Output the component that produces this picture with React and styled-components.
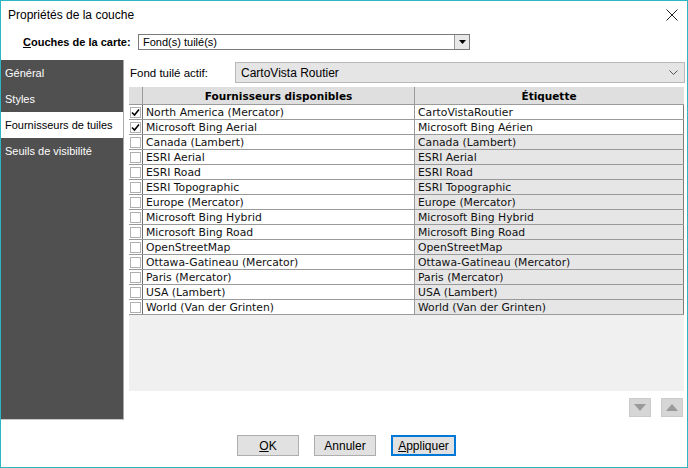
import React from "react";
import styled, { createGlobalStyle } from "styled-components";

const providers = [
  { name: "North America (Mercator)", label: "CartoVistaRoutier", checked: true },
  { name: "Microsoft Bing Aerial", label: "Microsoft Bing Aérien", checked: true },
  { name: "Canada (Lambert)", label: "Canada (Lambert)" },
  { name: "ESRI Aerial", label: "ESRI Aerial" },
  { name: "ESRI Road", label: "ESRI Road" },
  { name: "ESRI Topographic", label: "ESRI Topographic" },
  { name: "Europe (Mercator)", label: "Europe (Mercator)" },
  { name: "Microsoft Bing Hybrid", label: "Microsoft Bing Hybrid" },
  { name: "Microsoft Bing Road", label: "Microsoft Bing Road" },
  { name: "OpenStreetMap", label: "OpenStreetMap" },
  { name: "Ottawa-Gatineau (Mercator)", label: "Ottawa-Gatineau (Mercator)" },
  { name: "Paris (Mercator)", label: "Paris (Mercator)" },
  { name: "USA (Lambert)", label: "USA (Lambert)" },
  { name: "World (Van der Grinten)", label: "World (Van der Grinten)" },
];

const tabs = ["Général", "Styles", "Fournisseurs de tuiles", "Seuils de visibilité"];

const App = () => {
  return (
    <>
      <GlobalStyle />
      <Window>
        <TitleBar>
          <Title>Propriétés de la couche</Title>
          <CloseIcon width="12" height="12" viewBox="0 0 12 12">
            <path d="M0.5 0.5 L11.5 11.5 M11.5 0.5 L0.5 11.5" stroke="#222" strokeWidth="1" />
          </CloseIcon>
        </TitleBar>

        <LayerRow>
          <LayerLabel>
            <u>C</u>ouches de la carte:
          </LayerLabel>
          <LayerSelect>
            <span>Fond(s) tuilé(s)</span>
            <DropButton>
              <svg width="7" height="4" viewBox="0 0 7 4">
                <path d="M0 0 L7 0 L3.5 4 Z" fill="#000" />
              </svg>
            </DropButton>
          </LayerSelect>
        </LayerRow>

        <Body>
          <Sidebar>
            {tabs.map((t, i) => (
              <Tab key={t} active={i === 2}>
                {t}
              </Tab>
            ))}
          </Sidebar>

          <Content>
            <FieldRow>
              <FieldLabel>Fond tuilé actif:</FieldLabel>
              <Combo>
                <span>CartoVista Routier</span>
                <svg width="9" height="5" viewBox="0 0 9 5">
                  <path d="M0.5 0.5 L4.5 4.5 L8.5 0.5" stroke="#555" fill="none" />
                </svg>
              </Combo>
            </FieldRow>

            <Grid>
              <HeaderRow>
                <HeadCell />
                <HeadCell>Fournisseurs disponibles</HeadCell>
                <HeadCell last>Étiquette</HeadCell>
              </HeaderRow>
              {providers.map((p) => (
                <Row key={p.name}>
                  <CheckCell>
                    <Check>
                      {p.checked && (
                        <svg width="9" height="9" viewBox="0 0 9 9">
                          <path d="M1 4.5 L3.5 7 L8 1.5" stroke="#000" strokeWidth="1.6" fill="none" />
                        </svg>
                      )}
                    </Check>
                  </CheckCell>
                  <Cell>{p.name}</Cell>
                  <Cell readOnly={!p.checked} last>
                    {p.label}
                  </Cell>
                </Row>
              ))}
              <GridFill />
            </Grid>

            <ArrowRow>
              <ArrowButton>
                <svg width="12" height="7" viewBox="0 0 12 7">
                  <path d="M0 0 L12 0 L6 7 Z" fill="#9a9a9a" />
                </svg>
              </ArrowButton>
              <ArrowButton>
                <svg width="12" height="7" viewBox="0 0 12 7">
                  <path d="M0 7 L12 7 L6 0 Z" fill="#9a9a9a" />
                </svg>
              </ArrowButton>
            </ArrowRow>
          </Content>
        </Body>

        <Footer>
          <Button>
            <span>
              <u>O</u>K
            </span>
          </Button>
          <Button>Annuler</Button>
          <Button primary>
            <span>
              <u>A</u>ppliquer
            </span>
          </Button>
        </Footer>
      </Window>
    </>
  );
};

export default App;

const GlobalStyle = createGlobalStyle`
  html, body {
    margin: 0;
    padding: 0;
    background: #ffffff;
  }
  * {
    box-sizing: border-box;
  }
`;

const Window = styled.div`
  display: flex;
  flex-direction: column;

  width: 688px;
  height: 468px;

  background: #ffffff;
  border: 1px solid #2cb6c4;

  font-family: "Liberation Sans", Arial, sans-serif;
  font-size: 12px;
  color: #000;
`;

const TitleBar = styled.div`
  display: flex;
  align-items: center;
  justify-content: space-between;

  height: 28px;
  padding: 0 9px 0 7px;
`;

const Title = styled.div`
  font-size: 12px;
`;

const CloseIcon = styled.svg`
  display: block;
`;

const LayerRow = styled.div`
  display: flex;
  align-items: center;

  height: 16px;
  margin-top: 5px;
  padding-left: 22px;
`;

const LayerLabel = styled.div`
  width: 115px;
  white-space: nowrap;
  font-weight: bold;
  font-size: 11px;
`;

const LayerSelect = styled.div`
  display: flex;
  align-items: center;
  justify-content: space-between;

  width: 332px;
  height: 16px;
  padding-left: 4px;

  border: 1px solid #7a7a7a;
  background: #fff;

  font-size: 11px;
`;

const DropButton = styled.div`
  display: grid;
  place-items: center;

  width: 15px;
  height: 14px;

  background: #e8e8e8;
  border-left: 1px solid #9a9a9a;
`;

const Body = styled.div`
  display: flex;

  height: 360px;
  margin-top: 10px;
`;

const Sidebar = styled.div`
  display: flex;
  flex-direction: column;

  width: 123px;
  height: 360px;

  background: #505050;
  border-right: 1px solid #a8a8a8;
  border-bottom: 1px solid #c8c8c8;
`;

const Tab = styled.div`
  display: flex;
  align-items: center;

  height: 26px;
  padding-left: 4px;
  white-space: nowrap;

  background: ${({ active }) => (active ? "#ffffff" : "transparent")};
  color: ${({ active }) => (active ? "#000000" : "#ffffff")};

  font-size: 11px;
`;

const Content = styled.div`
  display: flex;
  flex-direction: column;

  flex: 1;
  padding: 2px 2px 0 5px;
`;

const FieldRow = styled.div`
  display: flex;
  align-items: center;

  height: 21px;
`;

const FieldLabel = styled.div`
  width: 106px;
  padding-left: 1px;
  font-size: 11.5px;
`;

const Combo = styled.div`
  display: flex;
  align-items: center;
  justify-content: space-between;

  flex: 1;
  height: 21px;
  padding: 0 6px 0 5px;

  background: #e5e5e5;
  border: 1px solid #b8b8b8;

  font-size: 12px;
`;

const Grid = styled.div`
  display: flex;
  flex-direction: column;

  height: 304px;
  margin-top: 4px;
  margin-right: 1px;

  background: #f0f0f0;
  font-family: "DejaVu Sans", Verdana, sans-serif;
  font-size: 10.8px;
`;

const cols = `
  display: grid;
  grid-template-columns: 14px 272px 1fr;
`;

const HeaderRow = styled.div`
  ${cols}
  height: 18px;
  background: #dfdfdf;
  border-bottom: 1px solid #9a9a9a;
`;

const HeadCell = styled.div`
  display: flex;
  align-items: center;
  justify-content: center;

  border-right: 1px solid ${({ last }) => (last ? "#dfdfdf" : "#9a9a9a")};
  font-size: 10.5px;
  font-weight: bold;
`;

const Row = styled.div`
  ${cols}
  height: 15px;
  background: #ffffff;
  border-bottom: 1px solid #9a9a9a;
`;

const CheckCell = styled.div`
  display: grid;
  place-items: center;
  border-right: 1px solid #6e6e6e;
`;

const Check = styled.div`
  display: grid;
  place-items: center;

  width: 11px;
  height: 11px;

  background: #fff;
  border: 1px solid #b0b0b0;
`;

const Cell = styled.div`
  display: flex;
  align-items: center;

  padding-left: 3px;
  overflow: hidden;
  white-space: nowrap;

  background: ${({ readOnly }) => (readOnly ? "#e6e6e6" : "#ffffff")};
  border-right: 1px solid ${({ last }) => (last ? "#7a7a7a" : "#9a9a9a")};
  color: #111;
`;

const GridFill = styled.div`
  flex: 1;
`;

const ArrowRow = styled.div`
  display: flex;
  justify-content: flex-end;
  gap: 10px;

  margin-top: 7px;
  padding-right: 2px;
`;

const ArrowButton = styled.div`
  display: grid;
  place-items: center;

  width: 22px;
  height: 19px;

  background: #d6d6d6;
  border: 1px solid #cacaca;
`;

const Footer = styled.div`
  display: flex;
  gap: 15px;

  padding-top: 15px;
  padding-left: 236px;
`;

const Button = styled.div`
  display: flex;
  align-items: center;
  justify-content: center;

  width: ${({ primary }) => (primary ? "65px" : "62px")};
  height: 21px;

  background: #e1e1e1;
  border: 1px solid ${({ primary }) => (primary ? "#0078d7" : "#adadad")};
  box-shadow: ${({ primary }) => (primary ? "inset 0 0 0 1px #0078d7" : "none")};

  font-size: 12px;
`;
